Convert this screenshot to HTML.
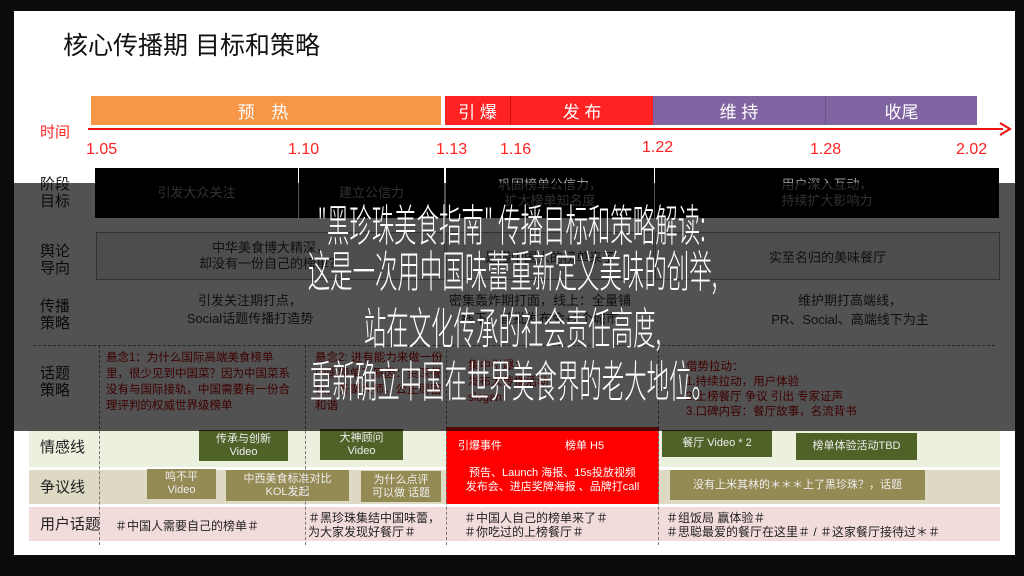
<!DOCTYPE html>
<html><head><meta charset="utf-8"><style>
*{margin:0;padding:0;box-sizing:border-box}
body{width:1024px;height:576px;background:#0b0b0b;overflow:hidden;position:relative;font-family:"Liberation Sans","Noto Sans CJK SC",sans-serif}
.a{position:absolute}
.slide{position:absolute;left:14px;top:11px;width:1001px;height:544px;background:#fff}
.c{display:flex;align-items:center;justify-content:center;text-align:center}
.lbl{position:absolute;left:40px;font-size:15px;line-height:17px;color:#222}
.date{position:absolute;top:141px;color:#f22;font-size:16px}
.blk{position:absolute;top:168px;height:50px;background:#000;color:#999;font-size:13px;line-height:16px}
.gr{background:#4f6228;color:#eee;font-size:11px;line-height:13px}
.ol{background:#948a54;color:#eee;font-size:11px;line-height:13px}
.rt{color:#c00000;font-size:11.5px;line-height:16px}
.big{position:absolute;left:0;width:1024px;text-align:center;color:#fff;font-family:"Noto Sans CJK SC",sans-serif;font-size:44px;font-weight:300;white-space:nowrap}
.big span{display:inline-block;transform:scaleX(0.51);transform-origin:center}
.vd{position:absolute;top:345px;height:200px;border-left:1px dashed #777}
</style></head><body>
<div class="slide"></div>
<div class="a" style="left:63px;top:26px;font-size:25px;color:#111">核心传播期 目标和策略</div>

<div class="a c" style="left:91px;top:96px;width:350px;height:29px;background:#f79646;color:#fff;font-size:17px;letter-spacing:6px">预 热</div>
<div class="a c" style="left:445px;top:96px;width:65px;height:29px;background:#fe2222;color:#fff;font-size:17px">引 爆</div>
<div class="a c" style="left:510px;top:96px;width:143px;height:29px;background:#fe2222;color:#fff;font-size:17px;border-left:1px solid #d01010">发 布</div>
<div class="a c" style="left:653px;top:96px;width:172px;height:29px;background:#8064a2;color:#fff;font-size:17px">维 持</div>
<div class="a c" style="left:825px;top:96px;width:152px;height:29px;background:#8064a2;color:#fff;font-size:17px;border-left:1px solid #6b528a">收尾</div>
<div class="a" style="left:88px;top:128px;width:915px;height:2px;background:#e11"></div>
<svg class="a" style="left:998px;top:122px" width="14" height="14"><path d="M2 1 L12 7 L2 13" stroke="#e11" stroke-width="2" fill="none"/></svg>
<div class="a" style="left:40px;top:121px;color:#f22;font-size:15px">时间</div>
<div class="date" style="left:86px">1.05</div>
<div class="date" style="left:288px">1.10</div>
<div class="date" style="left:436px">1.13</div>
<div class="date" style="left:500px">1.16</div>
<div class="date" style="left:642px;top:139px">1.22</div>
<div class="date" style="left:810px">1.28</div>
<div class="date" style="left:956px">2.02</div>

<div class="lbl" style="top:176px">阶段<br>目标</div>
<div class="blk c" style="left:95px;width:203px">引发大众关注</div>
<div class="blk c" style="left:299px;width:145px">建立公信力</div>
<div class="blk c" style="left:446px;width:208px">巩固榜单公信力，<br>扩大榜单知名度</div>
<div class="blk c" style="left:655px;width:344px">用户深入互动，<br>持续扩大影响力</div>

<div class="lbl" style="top:243px">舆论<br>导向</div>
<div class="a c" style="left:96px;top:232px;width:349px;height:48px;border:1px solid #999;background:#eee;color:#333;font-size:13px;line-height:16px">中华美食博大精深，<br>却没有一份自己的榜单？</div>
<div class="a c" style="left:446px;top:232px;width:208px;height:48px;border:1px solid #999;background:#eee;color:#333;font-size:13px">是懂中国人的榜单来了</div>
<div class="a c" style="left:655px;top:232px;width:345px;height:48px;border:1px solid #999;background:#eee;color:#333;font-size:13px">实至名归的美味餐厅</div>

<div class="lbl" style="top:298px">传播<br>策略</div>
<div class="a c" style="left:100px;top:290px;width:300px;height:40px;color:#333;font-size:13px;line-height:18px">引发关注期打点，<br>Social话题传播打造势</div>
<div class="a c" style="left:410px;top:290px;width:260px;height:40px;color:#333;font-size:13px;line-height:18px">密集轰炸期打面，线上：全量铺<br>线下：首批发布会+2个城市</div>
<div class="a c" style="left:720px;top:288px;width:260px;height:44px;color:#333;font-size:13px;line-height:19px">维护期打高端线，<br>PR、Social、高端线下为主</div>

<div class="a" style="left:33px;top:345px;width:962px;border-top:1px dashed #777"></div>
<div class="lbl" style="top:365px">话题<br>策略</div>
<div class="a rt" style="left:106px;top:350px;width:190px">悬念1：为什么国际高端美食榜单里，很少见到中国菜？因为中国菜系没有与国际接轨，中国需要有一份合理评判的权威世界级榜单</div>
<div class="a rt" style="left:315px;top:350px;width:128px">悬念2: 进有能力来做一份中国榜单？原因：资深餐饮，齐聚大师，公正周密和谐</div>
<div class="a rt" style="left:468px;top:358px;width:180px">集中引爆：<br>发布大传播活动<br>slogan</div>
<div class="a rt" style="left:686px;top:360px;width:300px;line-height:15px">借势拉动：<br>1.持续拉动，用户体验<br>2.上榜餐厅 争议 引出 专家证声<br>3.口碑内容：餐厅故事，名流背书</div>

<div class="a" style="left:29px;top:430px;width:417px;height:37px;background:#ebf1de"></div>
<div class="a" style="left:659px;top:430px;width:341px;height:37px;background:#ebf1de"></div>
<div class="a" style="left:29px;top:470px;width:417px;height:34px;background:#ddd9c3"></div>
<div class="a" style="left:659px;top:470px;width:341px;height:34px;background:#ddd9c3"></div>
<div class="a" style="left:29px;top:507px;width:971px;height:34px;background:#f2dcdb"></div>
<div class="a" style="left:446px;top:427px;width:213px;height:77px;background:#f00"></div>

<div class="lbl" style="top:439px">情感线</div>
<div class="lbl" style="top:479px">争议线</div>
<div class="lbl" style="top:516px">用户话题</div>

<div class="a c gr" style="left:199px;top:430px;width:89px;height:31px">传承与创新<br>Video</div>
<div class="a c gr" style="left:320px;top:429px;width:83px;height:31px">大神顾问<br>Video</div>
<div class="a c gr" style="left:662px;top:430px;width:110px;height:27px">餐厅 Video * 2</div>
<div class="a c gr" style="left:796px;top:433px;width:121px;height:27px">榜单体验活动TBD</div>
<div class="a c ol" style="left:147px;top:469px;width:69px;height:30px">鸣不平<br>Video</div>
<div class="a c ol" style="left:226px;top:470px;width:123px;height:31px">中西美食标准对比<br>KOL发起</div>
<div class="a c ol" style="left:361px;top:471px;width:80px;height:31px">为什么点评<br>可以做 话题</div>
<div class="a c ol" style="left:670px;top:470px;width:255px;height:30px">没有上米其林的＊＊＊上了黑珍珠？，话题</div>

<div class="a" style="left:458px;top:437px;color:#fff;font-size:11px">引爆事件</div>
<div class="a" style="left:565px;top:437px;color:#fff;font-size:11px">榜单 H5</div>
<div class="a c" style="left:446px;top:466px;width:213px;color:#fff;font-size:11px;line-height:14px">预告、Launch 海报、15s投放视频<br>发布会、进店奖牌海报 、品牌打call</div>

<div class="a" style="left:115px;top:517px;font-size:12px;color:#222">＃中国人需要自己的榜单＃</div>
<div class="a" style="left:308px;top:511px;font-size:12px;color:#222;line-height:14px">＃黑珍珠集结中国味蕾，<br>为大家发现好餐厅＃</div>
<div class="a" style="left:464px;top:511px;font-size:12px;color:#222;line-height:14px">＃中国人自己的榜单来了＃<br>＃你吃过的上榜餐厅＃</div>
<div class="a" style="left:666px;top:511px;font-size:12px;color:#222;line-height:14px">＃组饭局 赢体验＃<br>＃思聪最爱的餐厅在这里＃ / ＃这家餐厅接待过＊＃</div>

<div class="vd" style="left:99px"></div>
<div class="vd" style="left:305px"></div>
<div class="vd" style="left:446px"></div>
<div class="vd" style="left:658px"></div>

<div class="a" style="left:14px;top:183px;width:1001px;height:248px;background:rgba(0,0,0,0.68)"></div>
<div class="big" style="top:190px"><span>"黑珍珠美食指南" 传播目标和策略解读:</span></div>
<div class="big" style="top:236px"><span>这是一次用中国味蕾重新定义美味的创举,</span></div>
<div class="big" style="top:293px"><span>站在文化传承的社会责任高度,</span></div>
<div class="big" style="top:346px"><span>重新确立中国在世界美食界的老大地位。</span></div>
</body></html>
